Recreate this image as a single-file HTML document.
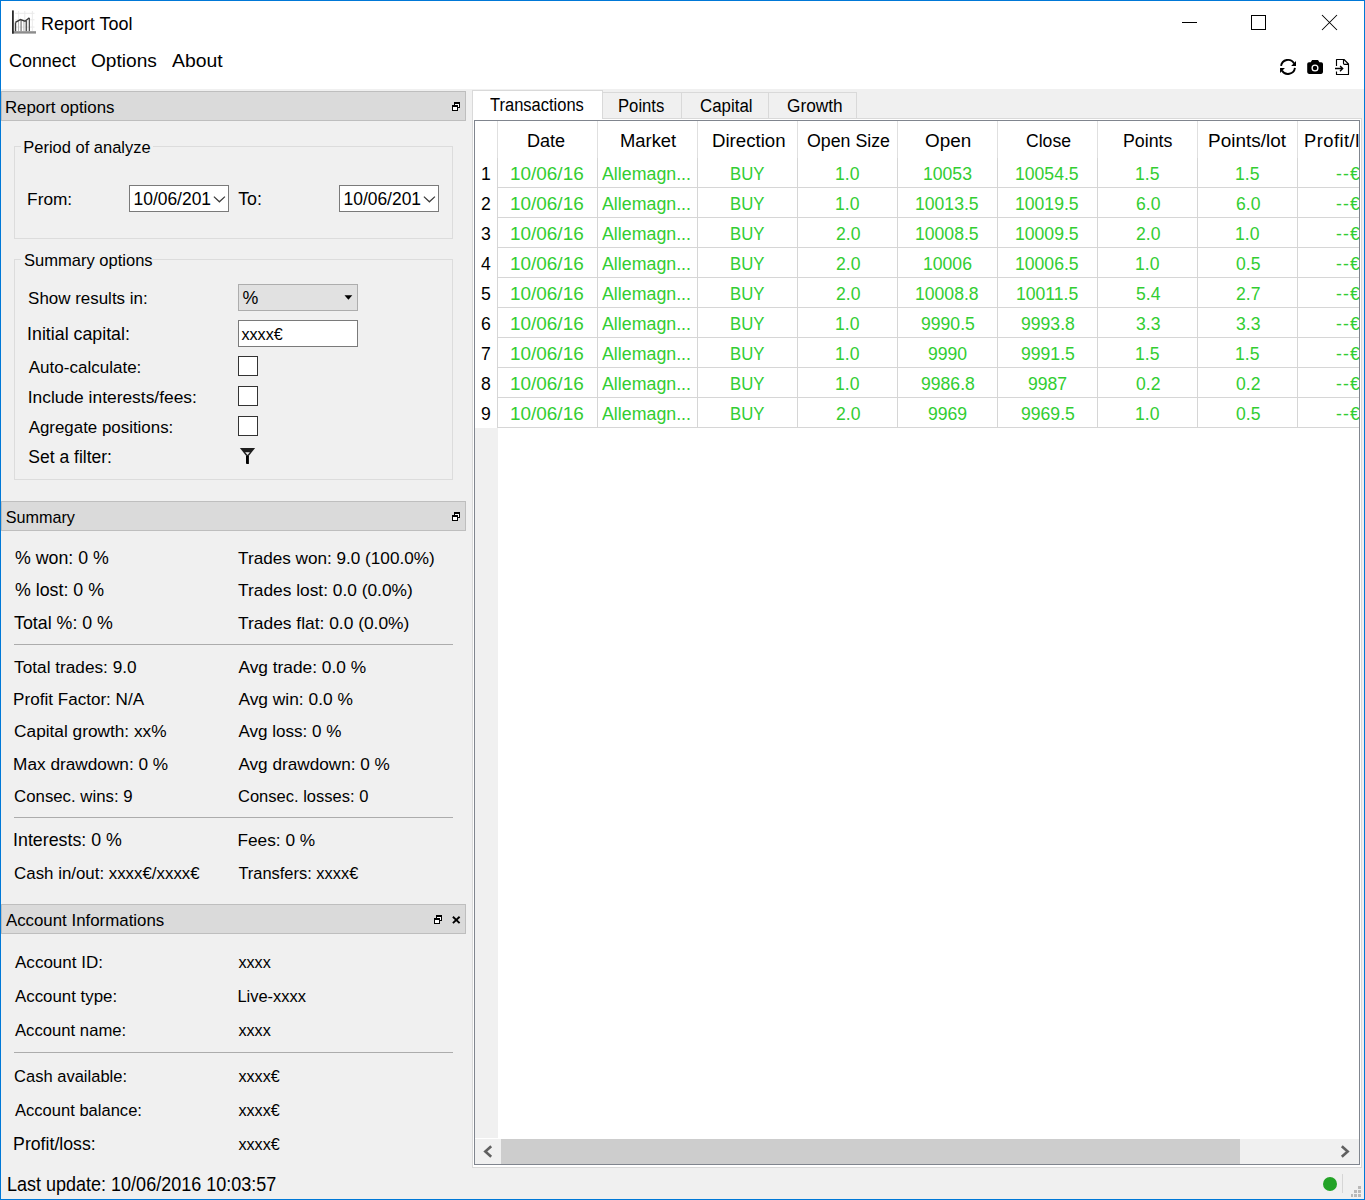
<!DOCTYPE html><html><head><meta charset="utf-8"><style>
html,body{margin:0;padding:0}
body{width:1365px;height:1200px;position:relative;overflow:hidden;background:#f0f0f0;font-family:"Liberation Sans",sans-serif;color:#000}
div,span,svg{position:absolute}
.t{white-space:nowrap;line-height:1;transform-origin:0 0}
svg{left:0;top:0;overflow:visible}
</style></head><body>
<div style="left:0px;top:0px;width:1365px;height:89px;background:#fff"></div>
<div style="left:12px;top:10px;width:25px;height:24px"><svg width="25" height="24">
<g stroke="#e8e8e8" stroke-width="0.9"><path d="M3 3.3H22.5M3 9.8H22.5M3 17.1H22.5M6.6 1V21M12.8 1V21M20.4 1V21"/></g>
<rect x="2.8" y="12.5" width="1.4" height="9" fill="#404040"/>
<rect x="6.1" y="10.2" width="0.9" height="11" fill="#b0b0b0"/>
<rect x="8.4" y="9.8" width="1.4" height="11.5" fill="#8a8a8a"/>
<rect x="11.4" y="10.6" width="0.9" height="10.6" fill="#b8b8b8"/>
<rect x="13.6" y="11" width="1.5" height="10.3" fill="#555"/>
<rect x="16.7" y="8" width="1.3" height="13.3" fill="#505050"/>
<path d="M3.4 12.4L8.4 9.6L13 11.2L17.4 7.7" stroke="#3a3a3a" stroke-width="1.4" fill="none"/>
<rect x="0" y="21.2" width="24" height="2.4" fill="#8c8c8c"/>
<rect x="0" y="0.4" width="1.8" height="23.2" fill="#2a2a2a"/>
</svg></div>
<div style="left:1182px;top:22px;width:15px;height:1px;background:#000"></div>
<div style="left:1251px;top:15px;width:15px;height:15px;border:1px solid #000;box-sizing:border-box"></div>
<div style="left:1321px;top:14px;width:17px;height:17px"><svg width="17" height="17"><path d="M1 1L16 16M16 1L1 16" stroke="#000" stroke-width="1.05"/></svg></div>
<div style="left:1280px;top:59px;width:17px;height:17px"><svg width="17" height="17">
<path d="M1.07 6.93A7 7 0 0 1 14.06 4.4M14.93 8.87A7 7 0 0 1 1.94 11.4" fill="none" stroke="#000" stroke-width="1.9"/>
<path d="M16 1.9V6.95H11.1Z M0.05 13.9V8.95H4.95Z" fill="#000"/></svg></div>
<div style="left:1307px;top:59px;width:17px;height:16px"><svg width="17" height="16">
<path d="M2 3.3H3.7L5.1 1H11L12.4 3.3H14.2Q16 3.3 16 5.1V13.1Q16 14.9 14.2 14.9H2Q0.2 14.9 0.2 13.1V5.1Q0.2 3.3 2 3.3Z" fill="#000"/>
<circle cx="8" cy="9" r="2.9" fill="none" stroke="#fff" stroke-width="1.3"/></svg></div>
<div style="left:1330px;top:55px;width:24px;height:24px"><svg width="24" height="24">
<path d="M6.5 11V4.5H14L18.5 9V19.5H6.5V16.5M13.5 4.5V8.2Q13.5 9.3 14.6 9.3H18.5" fill="none" stroke="#000" stroke-width="1.15" stroke-linejoin="round"/>
<path d="M5 13.5H12.6M10.1 11L12.7 13.5L10 16.2" fill="none" stroke="#000" stroke-width="1.35"/></svg></div>
<div style="left:1px;top:91px;width:465px;height:30px;background:#dadada;border:1px solid #bebebe;box-sizing:border-box"></div><div style="left:452px;top:102px;width:9px;height:9px"><svg width="9" height="9" shape-rendering="crispEdges"><rect x="2" y="0" width="6" height="2"/><rect x="7" y="0" width="1" height="6"/><rect x="2" y="0" width="1" height="3"/><rect x="6" y="5" width="2" height="1"/><rect x="3" y="2" width="4" height="3" fill="#fff"/><rect x="0" y="3" width="6" height="2"/><rect x="0" y="3" width="1" height="6"/><rect x="5" y="3" width="1" height="6"/><rect x="0" y="8" width="6" height="1"/><rect x="1" y="5" width="4" height="3" fill="#fff"/></svg></div>
<div style="left:14px;top:146px;width:439px;height:93px;border:1px solid #dcdcdc;box-sizing:border-box"></div>
<div style="left:21px;top:140px;width:132px;height:12px;background:#f0f0f0"></div>
<div style="left:14px;top:259px;width:439px;height:221px;border:1px solid #dcdcdc;box-sizing:border-box"></div>
<div style="left:21px;top:253px;width:131px;height:12px;background:#f0f0f0"></div>
<div style="left:129px;top:185px;width:100px;height:27px;background:#fff;border:1px solid #7a7a7a;box-sizing:border-box"></div>
<div style="left:213px;top:196px;width:12px;height:7px"><svg width="12" height="7"><path d="M0.9 0.6L6.4 5.8L11.9 0.6" fill="none" stroke="#3a3a3a" stroke-width="1.25"/></svg></div>
<div style="left:339px;top:185px;width:100px;height:27px;background:#fff;border:1px solid #7a7a7a;box-sizing:border-box"></div>
<div style="left:423px;top:196px;width:12px;height:7px"><svg width="12" height="7"><path d="M0.9 0.6L6.4 5.8L11.9 0.6" fill="none" stroke="#3a3a3a" stroke-width="1.25"/></svg></div>
<div style="left:238px;top:284px;width:120px;height:27px;background:#e1e1e1;border:1px solid #adadad;box-sizing:border-box"></div>
<div style="left:344px;top:295px;width:9px;height:5px"><svg width="9" height="5"><path d="M0.5 0.3H8.3L4.4 4.7Z" fill="#000"/></svg></div>
<div style="left:238px;top:320px;width:120px;height:27px;background:#fff;border:1px solid #7a7a7a;box-sizing:border-box"></div>
<div style="left:238px;top:356px;width:20px;height:20px;background:#fff;border:1px solid #333;box-sizing:border-box"></div>
<div style="left:238px;top:386px;width:20px;height:20px;background:#fff;border:1px solid #333;box-sizing:border-box"></div>
<div style="left:238px;top:416px;width:20px;height:20px;background:#fff;border:1px solid #333;box-sizing:border-box"></div>
<div style="left:239px;top:447px;width:17px;height:18px"><svg width="17" height="18">
<path d="M0.9 1H16.1L8.5 10.4Z" fill="#1e1e1e"/><path d="M6.1 5.2H10.9L8.5 8.1Z" fill="#f0f0f0"/>
<path d="M7 9V16.2Q7 17 8 17H9.9V9Z" fill="#000"/></svg></div>
<div style="left:1px;top:501px;width:465px;height:30px;background:#dadada;border:1px solid #bebebe;box-sizing:border-box"></div><div style="left:452px;top:512px;width:9px;height:9px"><svg width="9" height="9" shape-rendering="crispEdges"><rect x="2" y="0" width="6" height="2"/><rect x="7" y="0" width="1" height="6"/><rect x="2" y="0" width="1" height="3"/><rect x="6" y="5" width="2" height="1"/><rect x="3" y="2" width="4" height="3" fill="#fff"/><rect x="0" y="3" width="6" height="2"/><rect x="0" y="3" width="1" height="6"/><rect x="5" y="3" width="1" height="6"/><rect x="0" y="8" width="6" height="1"/><rect x="1" y="5" width="4" height="3" fill="#fff"/></svg></div>
<div style="left:14px;top:644px;width:439px;height:1px;background:#acacac"></div>
<div style="left:14px;top:817px;width:439px;height:1px;background:#acacac"></div>
<div style="left:1px;top:904px;width:465px;height:30px;background:#dadada;border:1px solid #bebebe;box-sizing:border-box"></div><div style="left:434px;top:915px;width:9px;height:9px"><svg width="9" height="9" shape-rendering="crispEdges"><rect x="2" y="0" width="6" height="2"/><rect x="7" y="0" width="1" height="6"/><rect x="2" y="0" width="1" height="3"/><rect x="6" y="5" width="2" height="1"/><rect x="3" y="2" width="4" height="3" fill="#fff"/><rect x="0" y="3" width="6" height="2"/><rect x="0" y="3" width="1" height="6"/><rect x="5" y="3" width="1" height="6"/><rect x="0" y="8" width="6" height="1"/><rect x="1" y="5" width="4" height="3" fill="#fff"/></svg></div><div style="left:452px;top:915.5px;width:9px;height:8px"><svg width="9" height="8"><path d="M0.9 0.7L7.6 7.1M7.6 0.7L0.9 7.1" stroke="#000" stroke-width="1.9"/></svg></div>
<div style="left:14px;top:1052px;width:439px;height:1px;background:#acacac"></div>
<div style="left:1323px;top:1177px;width:14px;height:14px;background:#23a327;border-radius:50%"></div>
<div style="left:1342px;top:1174px;width:1px;height:19px;background:#d6d6d6"></div>
<div style="left:1358px;top:1186px;width:3px;height:3px;background:#b9b9b9"></div>
<div style="left:1354px;top:1190px;width:3px;height:3px;background:#b9b9b9"></div>
<div style="left:1358px;top:1190px;width:3px;height:3px;background:#b9b9b9"></div>
<div style="left:1351px;top:1194px;width:2px;height:3px;background:#b9b9b9"></div>
<div style="left:1354px;top:1194px;width:3px;height:3px;background:#b9b9b9"></div>
<div style="left:1358px;top:1194px;width:3px;height:3px;background:#b9b9b9"></div>
<div style="left:472px;top:118px;width:890px;height:1050px;background:#fff;border:1px solid #d9d9d9;box-sizing:border-box"></div>
<div style="left:602px;top:92px;width:80px;height:27px;background:#f0f0f0;border:1px solid #d9d9d9;box-sizing:border-box"></div>
<div style="left:681px;top:92px;width:88px;height:27px;background:#f0f0f0;border:1px solid #d9d9d9;box-sizing:border-box"></div>
<div style="left:768px;top:92px;width:89px;height:27px;background:#f0f0f0;border:1px solid #d9d9d9;box-sizing:border-box"></div>
<div style="left:472px;top:90px;width:131px;height:29px;background:#fff;border:1px solid #d9d9d9;border-bottom:none;box-sizing:border-box"></div>
<div style="left:474px;top:120px;width:886px;height:1045px;background:#fff;border:1px solid #80858e;box-sizing:border-box"></div>
<div style="left:475px;top:121px;width:884px;height:1043px;overflow:hidden"><div style="left:0px;top:307px;width:23px;height:710px;background:#f0f0f0"></div><div style="left:22px;top:0px;width:1px;height:37px;background:#e0e0e0"></div><div style="left:22px;top:37px;width:1px;height:270px;background:#d6d6d6"></div><div style="left:122px;top:0px;width:1px;height:37px;background:#e0e0e0"></div><div style="left:122px;top:37px;width:1px;height:270px;background:#d6d6d6"></div><div style="left:222px;top:0px;width:1px;height:37px;background:#e0e0e0"></div><div style="left:222px;top:37px;width:1px;height:270px;background:#d6d6d6"></div><div style="left:322px;top:0px;width:1px;height:37px;background:#e0e0e0"></div><div style="left:322px;top:37px;width:1px;height:270px;background:#d6d6d6"></div><div style="left:422px;top:0px;width:1px;height:37px;background:#e0e0e0"></div><div style="left:422px;top:37px;width:1px;height:270px;background:#d6d6d6"></div><div style="left:522px;top:0px;width:1px;height:37px;background:#e0e0e0"></div><div style="left:522px;top:37px;width:1px;height:270px;background:#d6d6d6"></div><div style="left:622px;top:0px;width:1px;height:37px;background:#e0e0e0"></div><div style="left:622px;top:37px;width:1px;height:270px;background:#d6d6d6"></div><div style="left:722px;top:0px;width:1px;height:37px;background:#e0e0e0"></div><div style="left:722px;top:37px;width:1px;height:270px;background:#d6d6d6"></div><div style="left:822px;top:0px;width:1px;height:37px;background:#e0e0e0"></div><div style="left:822px;top:37px;width:1px;height:270px;background:#d6d6d6"></div><div style="left:22px;top:66px;width:862px;height:1px;background:#d6d6d6"></div><div style="left:22px;top:96px;width:862px;height:1px;background:#d6d6d6"></div><div style="left:22px;top:126px;width:862px;height:1px;background:#d6d6d6"></div><div style="left:22px;top:156px;width:862px;height:1px;background:#d6d6d6"></div><div style="left:22px;top:186px;width:862px;height:1px;background:#d6d6d6"></div><div style="left:22px;top:216px;width:862px;height:1px;background:#d6d6d6"></div><div style="left:22px;top:246px;width:862px;height:1px;background:#d6d6d6"></div><div style="left:22px;top:276px;width:862px;height:1px;background:#d6d6d6"></div><div style="left:22px;top:306px;width:862px;height:1px;background:#d6d6d6"></div><div style="left:0px;top:1018px;width:884px;height:25px;background:#f0f0f0"></div><div style="left:26px;top:1018px;width:739px;height:25px;background:#cdcdcd"></div><div style="left:7px;top:1024px;width:11px;height:13px"><svg width="11" height="13"><path d="M9.2 1.2L3.3 6.5L9.2 11.8" fill="none" stroke="#606060" stroke-width="2.6"/></svg></div><div style="left:865px;top:1024px;width:11px;height:13px"><svg width="11" height="13"><path d="M1.8 1.2L7.7 6.5L1.8 11.8" fill="none" stroke="#606060" stroke-width="2.6"/></svg></div><span class="t" style="left:51.54px;top:11.00px;font-size:18.9px;transform:scaleX(0.9566)">Date</span><span class="t" style="left:145.03px;top:11.00px;font-size:18.9px;transform:scaleX(0.9735)">Market</span><span class="t" style="left:236.71px;top:11.00px;font-size:18.9px;transform:scaleX(0.9873)">Direction</span><span class="t" style="left:332.20px;top:11.00px;font-size:18.9px;transform:scaleX(0.9402)">Open Size</span><span class="t" style="left:450.00px;top:11.00px;font-size:18.9px;transform:scaleX(0.9995)">Open</span><span class="t" style="left:551.40px;top:11.00px;font-size:18.9px;transform:scaleX(0.9317)">Close</span><span class="t" style="left:647.56px;top:11.00px;font-size:18.9px;transform:scaleX(0.9413)">Points</span><span class="t" style="left:733.20px;top:11.00px;font-size:18.9px;transform:scaleX(1.0032)">Points/lot</span><span class="t" style="left:829.03px;top:11.00px;font-size:18.9px;letter-spacing:0.5px;transform:scaleX(0.9683)">Profit/loss</span><span class="t" style="left:5.88px;top:44.00px;font-size:18.9px;transform:scaleX(0.9312)">1</span><span class="t" style="left:35.21px;top:44.00px;font-size:18.9px;color:#32cd32;transform:scaleX(1.0021)">10/06/16</span><span class="t" style="left:126.70px;top:44.00px;font-size:18.9px;color:#32cd32;transform:scaleX(0.9418)">Allemagn...</span><span class="t" style="left:254.58px;top:44.00px;font-size:18.9px;color:#32cd32;transform:scaleX(0.8857)">BUY</span><span class="t" style="left:360.04px;top:44.00px;font-size:18.9px;color:#32cd32;transform:scaleX(0.9312)">1.0</span><span class="t" style="left:447.81px;top:44.00px;font-size:18.9px;color:#32cd32;transform:scaleX(0.9312)">10053</span><span class="t" style="left:540.48px;top:44.00px;font-size:18.9px;color:#32cd32;transform:scaleX(0.9312)">10054.5</span><span class="t" style="left:660.04px;top:44.00px;font-size:18.9px;color:#32cd32;transform:scaleX(0.9312)">1.5</span><span class="t" style="left:760.04px;top:44.00px;font-size:18.9px;color:#32cd32;transform:scaleX(0.9312)">1.5</span><span class="t" style="left:860.80px;top:44.00px;font-size:18.9px;color:#32cd32;letter-spacing:1.2px;transform:scaleX(0.9312)">--€</span><span class="t" style="left:6.34px;top:74.00px;font-size:18.9px;transform:scaleX(0.9312)">2</span><span class="t" style="left:35.21px;top:74.00px;font-size:18.9px;color:#32cd32;transform:scaleX(1.0021)">10/06/16</span><span class="t" style="left:126.70px;top:74.00px;font-size:18.9px;color:#32cd32;transform:scaleX(0.9418)">Allemagn...</span><span class="t" style="left:254.58px;top:74.00px;font-size:18.9px;color:#32cd32;transform:scaleX(0.8857)">BUY</span><span class="t" style="left:360.04px;top:74.00px;font-size:18.9px;color:#32cd32;transform:scaleX(0.9312)">1.0</span><span class="t" style="left:440.48px;top:74.00px;font-size:18.9px;color:#32cd32;transform:scaleX(0.9312)">10013.5</span><span class="t" style="left:540.48px;top:74.00px;font-size:18.9px;color:#32cd32;transform:scaleX(0.9312)">10019.5</span><span class="t" style="left:660.51px;top:74.00px;font-size:18.9px;color:#32cd32;transform:scaleX(0.9312)">6.0</span><span class="t" style="left:760.51px;top:74.00px;font-size:18.9px;color:#32cd32;transform:scaleX(0.9312)">6.0</span><span class="t" style="left:860.80px;top:74.00px;font-size:18.9px;color:#32cd32;letter-spacing:1.2px;transform:scaleX(0.9312)">--€</span><span class="t" style="left:6.34px;top:104.00px;font-size:18.9px;transform:scaleX(0.9312)">3</span><span class="t" style="left:35.21px;top:104.00px;font-size:18.9px;color:#32cd32;transform:scaleX(1.0021)">10/06/16</span><span class="t" style="left:126.70px;top:104.00px;font-size:18.9px;color:#32cd32;transform:scaleX(0.9418)">Allemagn...</span><span class="t" style="left:254.58px;top:104.00px;font-size:18.9px;color:#32cd32;transform:scaleX(0.8857)">BUY</span><span class="t" style="left:360.51px;top:104.00px;font-size:18.9px;color:#32cd32;transform:scaleX(0.9312)">2.0</span><span class="t" style="left:440.48px;top:104.00px;font-size:18.9px;color:#32cd32;transform:scaleX(0.9312)">10008.5</span><span class="t" style="left:540.48px;top:104.00px;font-size:18.9px;color:#32cd32;transform:scaleX(0.9312)">10009.5</span><span class="t" style="left:660.51px;top:104.00px;font-size:18.9px;color:#32cd32;transform:scaleX(0.9312)">2.0</span><span class="t" style="left:760.04px;top:104.00px;font-size:18.9px;color:#32cd32;transform:scaleX(0.9312)">1.0</span><span class="t" style="left:860.80px;top:104.00px;font-size:18.9px;color:#32cd32;letter-spacing:1.2px;transform:scaleX(0.9312)">--€</span><span class="t" style="left:6.34px;top:134.00px;font-size:18.9px;transform:scaleX(0.9312)">4</span><span class="t" style="left:35.21px;top:134.00px;font-size:18.9px;color:#32cd32;transform:scaleX(1.0021)">10/06/16</span><span class="t" style="left:126.70px;top:134.00px;font-size:18.9px;color:#32cd32;transform:scaleX(0.9418)">Allemagn...</span><span class="t" style="left:254.58px;top:134.00px;font-size:18.9px;color:#32cd32;transform:scaleX(0.8857)">BUY</span><span class="t" style="left:360.51px;top:134.00px;font-size:18.9px;color:#32cd32;transform:scaleX(0.9312)">2.0</span><span class="t" style="left:447.81px;top:134.00px;font-size:18.9px;color:#32cd32;transform:scaleX(0.9312)">10006</span><span class="t" style="left:540.48px;top:134.00px;font-size:18.9px;color:#32cd32;transform:scaleX(0.9312)">10006.5</span><span class="t" style="left:660.04px;top:134.00px;font-size:18.9px;color:#32cd32;transform:scaleX(0.9312)">1.0</span><span class="t" style="left:760.51px;top:134.00px;font-size:18.9px;color:#32cd32;transform:scaleX(0.9312)">0.5</span><span class="t" style="left:860.80px;top:134.00px;font-size:18.9px;color:#32cd32;letter-spacing:1.2px;transform:scaleX(0.9312)">--€</span><span class="t" style="left:6.34px;top:164.00px;font-size:18.9px;transform:scaleX(0.9312)">5</span><span class="t" style="left:35.21px;top:164.00px;font-size:18.9px;color:#32cd32;transform:scaleX(1.0021)">10/06/16</span><span class="t" style="left:126.70px;top:164.00px;font-size:18.9px;color:#32cd32;transform:scaleX(0.9418)">Allemagn...</span><span class="t" style="left:254.58px;top:164.00px;font-size:18.9px;color:#32cd32;transform:scaleX(0.8857)">BUY</span><span class="t" style="left:360.51px;top:164.00px;font-size:18.9px;color:#32cd32;transform:scaleX(0.9312)">2.0</span><span class="t" style="left:440.48px;top:164.00px;font-size:18.9px;color:#32cd32;transform:scaleX(0.9312)">10008.8</span><span class="t" style="left:541.13px;top:164.00px;font-size:18.9px;color:#32cd32;transform:scaleX(0.9312)">10011.5</span><span class="t" style="left:660.51px;top:164.00px;font-size:18.9px;color:#32cd32;transform:scaleX(0.9312)">5.4</span><span class="t" style="left:760.51px;top:164.00px;font-size:18.9px;color:#32cd32;transform:scaleX(0.9312)">2.7</span><span class="t" style="left:860.80px;top:164.00px;font-size:18.9px;color:#32cd32;letter-spacing:1.2px;transform:scaleX(0.9312)">--€</span><span class="t" style="left:6.34px;top:194.00px;font-size:18.9px;transform:scaleX(0.9312)">6</span><span class="t" style="left:35.21px;top:194.00px;font-size:18.9px;color:#32cd32;transform:scaleX(1.0021)">10/06/16</span><span class="t" style="left:126.70px;top:194.00px;font-size:18.9px;color:#32cd32;transform:scaleX(0.9418)">Allemagn...</span><span class="t" style="left:254.58px;top:194.00px;font-size:18.9px;color:#32cd32;transform:scaleX(0.8857)">BUY</span><span class="t" style="left:360.04px;top:194.00px;font-size:18.9px;color:#32cd32;transform:scaleX(0.9312)">1.0</span><span class="t" style="left:445.83px;top:194.00px;font-size:18.9px;color:#32cd32;transform:scaleX(0.9312)">9990.5</span><span class="t" style="left:545.83px;top:194.00px;font-size:18.9px;color:#32cd32;transform:scaleX(0.9312)">9993.8</span><span class="t" style="left:660.51px;top:194.00px;font-size:18.9px;color:#32cd32;transform:scaleX(0.9312)">3.3</span><span class="t" style="left:760.51px;top:194.00px;font-size:18.9px;color:#32cd32;transform:scaleX(0.9312)">3.3</span><span class="t" style="left:860.80px;top:194.00px;font-size:18.9px;color:#32cd32;letter-spacing:1.2px;transform:scaleX(0.9312)">--€</span><span class="t" style="left:6.34px;top:224.00px;font-size:18.9px;transform:scaleX(0.9312)">7</span><span class="t" style="left:35.21px;top:224.00px;font-size:18.9px;color:#32cd32;transform:scaleX(1.0021)">10/06/16</span><span class="t" style="left:126.70px;top:224.00px;font-size:18.9px;color:#32cd32;transform:scaleX(0.9418)">Allemagn...</span><span class="t" style="left:254.58px;top:224.00px;font-size:18.9px;color:#32cd32;transform:scaleX(0.8857)">BUY</span><span class="t" style="left:360.04px;top:224.00px;font-size:18.9px;color:#32cd32;transform:scaleX(0.9312)">1.0</span><span class="t" style="left:453.17px;top:224.00px;font-size:18.9px;color:#32cd32;transform:scaleX(0.9312)">9990</span><span class="t" style="left:545.83px;top:224.00px;font-size:18.9px;color:#32cd32;transform:scaleX(0.9312)">9991.5</span><span class="t" style="left:660.04px;top:224.00px;font-size:18.9px;color:#32cd32;transform:scaleX(0.9312)">1.5</span><span class="t" style="left:760.04px;top:224.00px;font-size:18.9px;color:#32cd32;transform:scaleX(0.9312)">1.5</span><span class="t" style="left:860.80px;top:224.00px;font-size:18.9px;color:#32cd32;letter-spacing:1.2px;transform:scaleX(0.9312)">--€</span><span class="t" style="left:6.34px;top:254.00px;font-size:18.9px;transform:scaleX(0.9312)">8</span><span class="t" style="left:35.21px;top:254.00px;font-size:18.9px;color:#32cd32;transform:scaleX(1.0021)">10/06/16</span><span class="t" style="left:126.70px;top:254.00px;font-size:18.9px;color:#32cd32;transform:scaleX(0.9418)">Allemagn...</span><span class="t" style="left:254.58px;top:254.00px;font-size:18.9px;color:#32cd32;transform:scaleX(0.8857)">BUY</span><span class="t" style="left:360.04px;top:254.00px;font-size:18.9px;color:#32cd32;transform:scaleX(0.9312)">1.0</span><span class="t" style="left:445.83px;top:254.00px;font-size:18.9px;color:#32cd32;transform:scaleX(0.9312)">9986.8</span><span class="t" style="left:553.17px;top:254.00px;font-size:18.9px;color:#32cd32;transform:scaleX(0.9312)">9987</span><span class="t" style="left:660.51px;top:254.00px;font-size:18.9px;color:#32cd32;transform:scaleX(0.9312)">0.2</span><span class="t" style="left:760.51px;top:254.00px;font-size:18.9px;color:#32cd32;transform:scaleX(0.9312)">0.2</span><span class="t" style="left:860.80px;top:254.00px;font-size:18.9px;color:#32cd32;letter-spacing:1.2px;transform:scaleX(0.9312)">--€</span><span class="t" style="left:6.34px;top:284.00px;font-size:18.9px;transform:scaleX(0.9312)">9</span><span class="t" style="left:35.21px;top:284.00px;font-size:18.9px;color:#32cd32;transform:scaleX(1.0021)">10/06/16</span><span class="t" style="left:126.70px;top:284.00px;font-size:18.9px;color:#32cd32;transform:scaleX(0.9418)">Allemagn...</span><span class="t" style="left:254.58px;top:284.00px;font-size:18.9px;color:#32cd32;transform:scaleX(0.8857)">BUY</span><span class="t" style="left:360.51px;top:284.00px;font-size:18.9px;color:#32cd32;transform:scaleX(0.9312)">2.0</span><span class="t" style="left:453.17px;top:284.00px;font-size:18.9px;color:#32cd32;transform:scaleX(0.9312)">9969</span><span class="t" style="left:545.83px;top:284.00px;font-size:18.9px;color:#32cd32;transform:scaleX(0.9312)">9969.5</span><span class="t" style="left:660.04px;top:284.00px;font-size:18.9px;color:#32cd32;transform:scaleX(0.9312)">1.0</span><span class="t" style="left:760.51px;top:284.00px;font-size:18.9px;color:#32cd32;transform:scaleX(0.9312)">0.5</span><span class="t" style="left:860.80px;top:284.00px;font-size:18.9px;color:#32cd32;letter-spacing:1.2px;transform:scaleX(0.9312)">--€</span></div>
<span class="t" style="left:41.04px;top:15.00px;font-size:18.6px;transform:scaleX(0.9645)">Report Tool</span>
<span class="t" style="left:9.30px;top:52.00px;font-size:18.9px;transform:scaleX(0.9481)">Connect</span>
<span class="t" style="left:91.00px;top:52.00px;font-size:18.9px;transform:scaleX(1.0122)">Options</span>
<span class="t" style="left:172.30px;top:52.00px;font-size:18.9px;transform:scaleX(1.0254)">About</span>
<span class="t" style="left:4.90px;top:100.00px;font-size:16.86px">Report options</span>
<span class="t" style="left:5.70px;top:509.00px;font-size:16.2px">Summary</span>
<span class="t" style="left:5.90px;top:913.00px;font-size:16.87px">Account Informations</span>
<span class="t" style="left:23.30px;top:139.00px;font-size:16.49px">Period of analyze</span>
<span class="t" style="left:27.10px;top:191.00px;font-size:17.27px">From:</span>
<span class="t" style="left:133.50px;top:191.00px;font-size:17.43px">10/06/201</span>
<span class="t" style="left:238.20px;top:191.00px;font-size:17.8px">To:</span>
<span class="t" style="left:343.50px;top:191.00px;font-size:17.43px">10/06/201</span>
<span class="t" style="left:24.00px;top:253.00px;font-size:16.54px">Summary options</span>
<span class="t" style="left:28.10px;top:291.00px;font-size:16.95px">Show results in:</span>
<span class="t" style="left:242.60px;top:290.00px;font-size:17.8px">%</span>
<span class="t" style="left:27.10px;top:326.00px;font-size:17.8px">Initial capital:</span>
<span class="t" style="left:241.40px;top:326.00px;font-size:16.2px">xxxx€</span>
<span class="t" style="left:28.70px;top:359.00px;font-size:17.05px">Auto-calculate:</span>
<span class="t" style="left:27.70px;top:389.00px;font-size:17.4px">Include interests/fees:</span>
<span class="t" style="left:28.70px;top:420.00px;font-size:16.9px">Agregate positions:</span>
<span class="t" style="left:28.30px;top:449.00px;font-size:17.5px">Set a filter:</span>
<span class="t" style="left:15.00px;top:550.00px;font-size:17.8px">% won: 0 %</span>
<span class="t" style="left:238.10px;top:550.00px;font-size:17.15px">Trades won: 9.0 (100.0%)</span>
<span class="t" style="left:15.00px;top:582.00px;font-size:17.8px">% lost: 0 %</span>
<span class="t" style="left:238.10px;top:582.00px;font-size:17.33px">Trades lost: 0.0 (0.0%)</span>
<span class="t" style="left:14.10px;top:615.00px;font-size:17.8px">Total %: 0 %</span>
<span class="t" style="left:238.10px;top:615.00px;font-size:17.39px">Trades flat: 0.0 (0.0%)</span>
<span class="t" style="left:14.10px;top:659.00px;font-size:17.23px">Total trades: 9.0</span>
<span class="t" style="left:238.40px;top:659.00px;font-size:17.32px">Avg trade: 0.0 %</span>
<span class="t" style="left:13.10px;top:691.00px;font-size:17.08px">Profit Factor: N/A</span>
<span class="t" style="left:238.40px;top:691.00px;font-size:17.36px">Avg win: 0.0 %</span>
<span class="t" style="left:14.10px;top:723.00px;font-size:17.26px">Capital growth: xx%</span>
<span class="t" style="left:238.40px;top:723.00px;font-size:17.07px">Avg loss: 0 %</span>
<span class="t" style="left:13.10px;top:756.00px;font-size:17.23px">Max drawdown: 0 %</span>
<span class="t" style="left:238.40px;top:756.00px;font-size:17.18px">Avg drawdown: 0 %</span>
<span class="t" style="left:14.10px;top:789.00px;font-size:16.79px">Consec. wins: 9</span>
<span class="t" style="left:238.00px;top:789.00px;font-size:16.52px">Consec. losses: 0</span>
<span class="t" style="left:13.10px;top:832.00px;font-size:17.8px">Interests: 0 %</span>
<span class="t" style="left:237.40px;top:832.00px;font-size:17.3px">Fees: 0 %</span>
<span class="t" style="left:14.10px;top:866.00px;font-size:16.86px">Cash in/out: xxxx€/xxxx€</span>
<span class="t" style="left:238.40px;top:865.00px;font-size:16.45px">Transfers: xxxx€</span>
<span class="t" style="left:15.00px;top:954.00px;font-size:17.04px">Account ID:</span>
<span class="t" style="left:238.40px;top:954.00px;font-size:16.2px">xxxx</span>
<span class="t" style="left:15.00px;top:989.00px;font-size:16.86px">Account type:</span>
<span class="t" style="left:237.40px;top:988.00px;font-size:16.48px">Live-xxxx</span>
<span class="t" style="left:15.00px;top:1023.00px;font-size:16.68px">Account name:</span>
<span class="t" style="left:238.40px;top:1022.00px;font-size:16.2px">xxxx</span>
<span class="t" style="left:14.10px;top:1069.00px;font-size:16.52px">Cash available:</span>
<span class="t" style="left:238.40px;top:1068.00px;font-size:16.2px">xxxx€</span>
<span class="t" style="left:15.00px;top:1103.00px;font-size:16.56px">Account balance:</span>
<span class="t" style="left:238.40px;top:1102.00px;font-size:16.2px">xxxx€</span>
<span class="t" style="left:13.10px;top:1136.00px;font-size:17.69px">Profit/loss:</span>
<span class="t" style="left:238.40px;top:1136.00px;font-size:16.2px">xxxx€</span>
<span class="t" style="left:6.77px;top:1175.00px;font-size:19.3px;transform:scaleX(0.9337)">Last update: 10/06/2016 10:03:57</span>
<span class="t" style="left:490.00px;top:97.00px;font-size:17.6px;transform:scaleX(0.9375)">Transactions</span>
<span class="t" style="left:618.35px;top:98.00px;font-size:17.6px;transform:scaleX(0.9472)">Points</span>
<span class="t" style="left:699.70px;top:98.00px;font-size:17.6px;transform:scaleX(0.9602)">Capital</span>
<span class="t" style="left:786.90px;top:98.00px;font-size:17.6px;transform:scaleX(0.9807)">Growth</span>
<div style="left:0px;top:0px;width:1365px;height:1200px;border:1px solid #0078d7;box-sizing:border-box;pointer-events:none"></div>
</body></html>
